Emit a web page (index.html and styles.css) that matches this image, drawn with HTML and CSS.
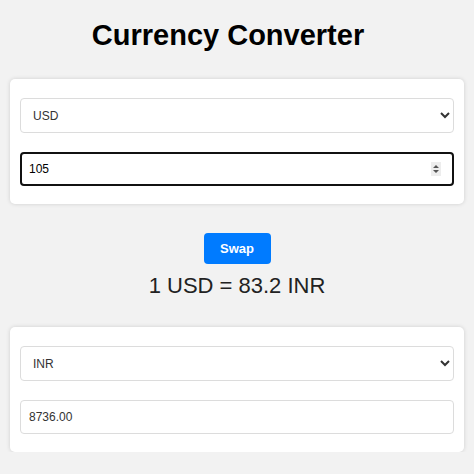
FILE: index.html
```html
<!DOCTYPE html>
<html lang="en">
<head>
  <meta charset="UTF-8" />
  <meta name="viewport" content="width=device-width, initial-scale=1.0"/>
  <title>Currency Converter</title>
  <link rel="stylesheet" href="styles.css">
</head>
<body>

  <h1>Currency Converter</h1>

  <!-- From -->
  <div class="card">
    <select id="fromCurrency">
      <option selected>USD</option>
      <option>INR</option>
      <option>EUR</option>
    </select>
    <div class="amount-wrap">
      <input type="number" id="amount" class="amount" value="105" autofocus />
      <span class="spinner">
        <svg width="8" height="10" viewBox="0 0 8 10">
          <path d="M1 4 L4 1 L7 4 Z M1 6 L4 9 L7 6 Z" fill="#555"/>
        </svg>
      </span>
    </div>
  </div>

  <div class="middle">
    <button class="btn-primary" id="swapBtn">Swap</button>
    <div class="rate" id="rate">1 USD = 83.2 INR</div>
  </div>

  <!-- To -->
  <div class="card">
    <select id="toCurrency">
      <option>USD</option>
      <option selected>INR</option>
      <option>EUR</option>
    </select>
    <input type="text" id="result" value="8736.00" readonly />
  </div>

</body>
</html>
```

FILE: styles.css
```css
body {
  font-family: "Liberation Sans", Arial, sans-serif;
  margin: 0;
  background-color: #f2f2f2;
}
h1 {
  margin: 19px 0 27px;
  padding-right: 18px;
  text-align: center;
  font-size: 29px;
  color: #000;
}
.card {
  background: white;
  margin: 0 10px;
  padding: 19px 10px 18px;
  border-radius: 5px;
  box-shadow: 0 0 4px rgba(0,0,0,0.15);
  display: flex;
  flex-direction: column;
  gap: 19px;
}
select, input {
  box-sizing: border-box;
  width: 100%;
  font-family: "Liberation Sans", Arial, sans-serif;
  font-size: 12px;
  color: #333;
  padding: 0 8px;
  border: 1px solid #dcdcdc;
  border-radius: 4px;
  background: white;
}
select {
  height: 35px;
}
input {
  height: 34px;
}
.amount-wrap {
  position: relative;
}
.amount {
  -moz-appearance: textfield;
}
.amount::-webkit-inner-spin-button,
.amount::-webkit-outer-spin-button {
  -webkit-appearance: none;
  margin: 0;
}
.amount:focus {
  outline: none;
  border: 2px solid #111;
  padding: 0 7px;
  color: #000;
}
.spinner {
  position: absolute;
  right: 13px;
  top: 10px;
  width: 10px;
  height: 14px;
  background: #ededed;
  display: flex;
  align-items: center;
  justify-content: center;
}
.middle {
  margin: 29px 0 28px;
  text-align: center;
}
.btn-primary {
  width: 67px;
  height: 31px;
  border: none;
  border-radius: 4px;
  background-color: #007bff;
  color: white;
  font-family: "Liberation Sans", Arial, sans-serif;
  font-size: 13px;
  font-weight: bold;
  cursor: pointer;
}
.btn-primary:hover {
  opacity: 0.8;
}
.rate {
  margin-top: 9px;
  font-size: 22px;
  color: #222;
}
```
